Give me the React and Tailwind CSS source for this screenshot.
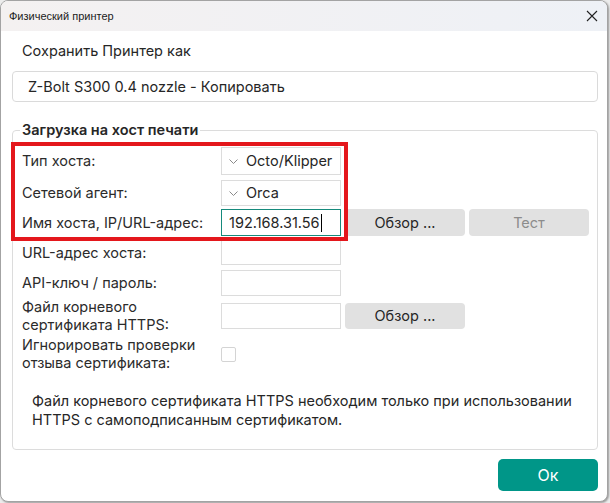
import React from "react";

const font = { fontFamily: "Inter, 'Noto Sans', sans-serif" };

function Chevron() {
  return (
    <svg width="9" height="5" viewBox="0 0 9 5" className="shrink-0">
      <polyline points="0.5,0.5 4.5,4.5 8.5,0.5" fill="none" stroke="#8a8a8a" strokeWidth="1" />
    </svg>
  );
}

function Combo({ value, h }) {
  return (
    <div className={`flex w-[120px] ${h} items-center gap-[8px] border border-[#dcdcdc] bg-white pl-[7px] text-[14.5px] text-[#262626]`}>
      <Chevron />
      <span>{value}</span>
    </div>
  );
}

function Field({ h }) {
  return <div className={`w-[120px] ${h} border border-[#dcdcdc] bg-white`} />;
}

function Btn({ children, dim, h }) {
  return (
    <div
      className={`flex w-[120px] ${h} items-center justify-center rounded-[4px] bg-[#e1e1e1] text-[14.5px] ${
        dim ? "text-[#8c8c8c]" : "text-[#262626]"
      }`}
    >
      {children}
    </div>
  );
}

export default function App() {
  return (
    <div className="h-[503px] w-[610px] overflow-hidden bg-[#ececec]" style={font}>
      <div className="relative flex h-[502px] w-[608px] flex-col overflow-hidden rounded-[8px] border border-[#a3a3a3] bg-white shadow-[1px_1px_2px_rgba(0,0,0,0.35)]">
        {/* title bar */}
        <div className="flex h-[30px] shrink-0 items-center justify-between bg-gradient-to-r from-[#f4f1f1] to-[#eef1f6] pl-[8px] pr-[9px]">
          <span className="text-[11px] text-[#1b1b1b]" style={{ fontFamily: "'Liberation Sans', sans-serif" }}>
            Физический принтер
          </span>
          <svg width="12" height="12" viewBox="0 0 12 12">
            <path d="M1 1 L11 11 M11 1 L1 11" stroke="#222" strokeWidth="1.1" />
          </svg>
        </div>

        {/* body */}
        <div className="flex flex-col pl-[11px] pr-[9px]">
          <div className="mt-[10px] pl-[10px] text-[14.5px] leading-[20px] text-[#262626]">Сохранить Принтер как</div>
          <div className="mt-[10px] flex h-[31px] items-center rounded-[4px] border border-[#dadada] pl-[15px] text-[14.5px] text-[#262626]">
            Z-Bolt S300 0.4 nozzle - Копировать
          </div>

          <fieldset className="relative mt-[18px] h-[330px] rounded-[4px] border border-[#dcdcdc] pl-[9px]">
            <legend className="-ml-[2px] px-[2px] text-[14.5px] font-semibold leading-[20px] text-[#262626]">
              Загрузка на хост печати
            </legend>

            <div className="mt-[7px] flex flex-col text-[14.5px] text-[#2b2b2b]">
              <div className="flex items-center">
                <div className="w-[199px]">Тип хоста:</div>
                <Combo value="Octo/Klipper" h="h-[28px]" />
              </div>
              <div className="mt-[5px] flex items-center">
                <div className="w-[199px]">Сетевой агент:</div>
                <Combo value="Orca" h="h-[26px]" />
              </div>
              <div className="mt-[3px] flex items-center">
                <div className="w-[199px]">Имя хоста, IP/URL-адрес:</div>
                <div className="flex h-[27px] w-[120px] items-center border border-[#168a7c] bg-white pl-[7px] text-[14.5px] text-[#262626]">
                  <span>192.168.31.56</span>
                  <span className="ml-[1px] h-[18px] w-[1px] bg-black" />
                </div>
                <div className="ml-[4px] flex gap-[4px]">
                  <Btn h="h-[27px]">Обзор ...</Btn>
                  <Btn h="h-[27px]" dim>
                    Тест
                  </Btn>
                </div>
              </div>
              <div className="mt-[4px] flex items-center">
                <div className="w-[199px]">URL-адрес хоста:</div>
                <Field h="h-[25px]" />
              </div>
              <div className="mt-[5px] flex items-center">
                <div className="w-[199px]">API-ключ / пароль:</div>
                <Field h="h-[26px]" />
              </div>
              <div className="mt-[2px] flex items-center">
                <div className="w-[199px] leading-[18px]">
                  Файл корневого
                  <br />
                  сертификата HTTPS:
                </div>
                <Field h="h-[26px]" />
                <div className="ml-[4px]">
                  <Btn h="h-[26px]">Обзор ...</Btn>
                </div>
              </div>
              <div className="mt-[2px] flex items-center">
                <div className="w-[199px] leading-[18px]">
                  Игнорировать проверки
                  <br />
                  отзыва сертификата:
                </div>
                <div className="h-[15px] w-[15px] rounded-[2px] border border-[#d4d4d4] bg-white" />
              </div>
              <div className="mt-[19px] pl-[10px] leading-[19px] text-[#262626]">
                Файл корневого сертификата HTTPS необходим только при использовании
                <br />
                HTTPS с самоподписанным сертификатом.
              </div>
            </div>
          </fieldset>

          <div className="mt-[9px] flex justify-end">
            <div className="flex h-[32px] w-[100px] items-center justify-center rounded-[5px] bg-[#009688] text-[16px] text-white">
              Ок
            </div>
          </div>
        </div>

        {/* red highlight frame around the host settings */}
        <div className="pointer-events-none absolute left-[10px] top-[141px] h-[99px] w-[337px] border-[4px] border-[#e4171c]" />
      </div>
    </div>
  );
}
